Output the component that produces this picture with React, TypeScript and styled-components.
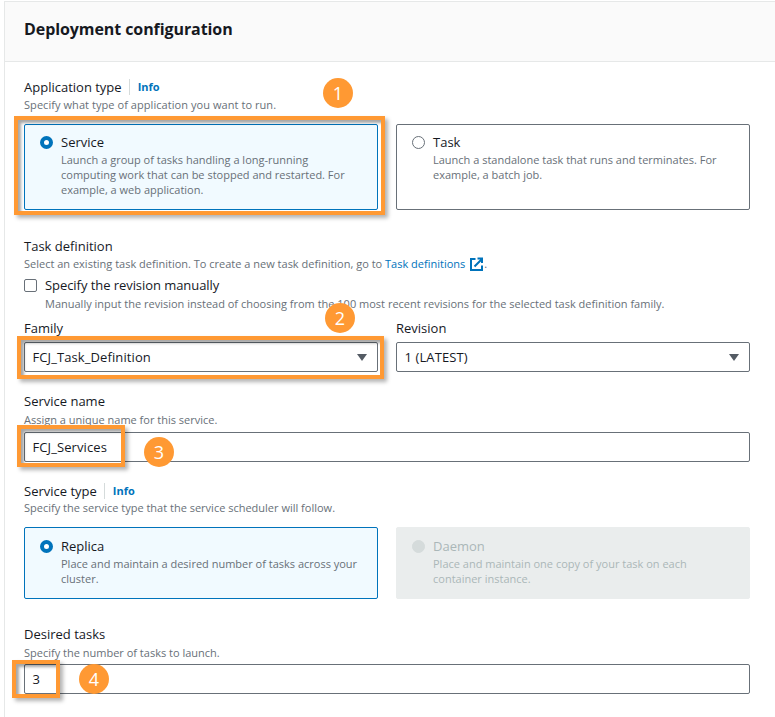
import React from "react";
import styled, { createGlobalStyle } from "styled-components";

const Global = createGlobalStyle`
  html, body { margin: 0; padding: 0; background: #fff; }
  body { font-family: "Open Sans", "Noto Sans", Arial, sans-serif; color: #16191f; }
  #root { width: 775px; height: 717px; overflow: hidden; position: relative; }
`;

const Page = styled.div`
  position: relative;
  width: 775px;
  height: 717px;
  overflow: hidden;
  padding: 1px 0 0 4px;
  box-sizing: border-box;
`;

const Panel = styled.section`
  width: 790px;
  height: 730px;
  box-sizing: border-box;
  border: 1px solid #e6e8e8;
  background: #fff;
`;

const Header = styled.header`
  height: 60px;
  box-sizing: border-box;
  background: #fafafa;
  border-bottom: 1px solid #e6e8e8;
  padding: 15px 19px 0;
`;

const Title = styled.h2`
  margin: 0;
  font-size: 16px;
  line-height: 24px;
  font-weight: 700;
  letter-spacing: -0.08px;
  color: #16191f;
`;

const Body = styled.div`
  width: 726px;
  margin-left: 19px;
  display: flex;
  flex-direction: column;
`;

const LabelRow = styled.div<{ $top?: number }>`
  display: flex;
  align-items: center;
  height: 18px;
  margin-top: ${(p) => p.$top ?? 0}px;
`;

const Label = styled.label`
  font-size: 13px;
  line-height: 18px;
  color: #16191f;
`;

const CheckLabel = styled(Label)`
  letter-spacing: -0.06px;
`;

const Info = styled.a`
  margin-left: 7px;
  padding-left: 8px;
  border-left: 1px solid #d5dbdb;
  font-size: 11px;
  line-height: 16px;
  font-weight: 700;
  color: #0073bb;
`;

const Hint = styled.div<{ $top?: number; $spacing?: number }>`
  margin-top: ${(p) => p.$top ?? 1}px;
  font-size: 11px;
  line-height: 16px;
  letter-spacing: ${(p) => p.$spacing ?? 0}px;
  color: #687078;
  white-space: nowrap;
`;

const Link = styled.a`
  color: #0073bb;
`;

const Grid = styled.div<{ $top: number }>`
  display: grid;
  grid-template-columns: 354px 354px;
  column-gap: 18px;
  margin-top: ${(p) => p.$top}px;
`;

const Tile = styled.div<{ $state: "on" | "off" | "disabled"; $h: number; $pad?: number }>`
  height: ${(p) => p.$h}px;
  box-sizing: border-box;
  border-radius: 2px;
  padding: ${(p) => p.$pad ?? 8}px 15px;
  display: flex;
  gap: 8px;
  border: 1px solid
    ${(p) => (p.$state === "on" ? "#0073bb" : p.$state === "off" ? "#687078" : "#eaeded")};
  background: ${(p) => (p.$state === "on" ? "#f1faff" : p.$state === "off" ? "#fff" : "#eaeded")};
`;

const Radio = styled.span<{ $state: "on" | "off" | "disabled" }>`
  flex: none;
  width: 13px;
  height: 13px;
  margin-top: 3px;
  border-radius: 50%;
  box-sizing: border-box;
  background: ${(p) => (p.$state === "disabled" ? "#d5dbdb" : "#fff")};
  border: ${(p) =>
    p.$state === "on"
      ? "4px solid #0073bb"
      : p.$state === "off"
        ? "1px solid #687078"
        : "1px solid #d5dbdb"};
`;

const TileText = styled.div`
  min-width: 0;
`;

const TileTitle = styled.div<{ $disabled?: boolean }>`
  font-size: 13px;
  line-height: 18px;
  color: ${(p) => (p.$disabled ? "#aab7b8" : "#16191f")};
`;

const TileDesc = styled.div<{ $disabled?: boolean }>`
  font-size: 11px;
  line-height: 15px;
  margin-top: 1px;
  color: ${(p) => (p.$disabled ? "#aab7b8" : "#687078")};
`;

const CheckRow = styled.div`
  display: flex;
  align-items: center;
  gap: 8px;
  height: 18px;
  margin-top: 4px;
`;

const CheckBox = styled.span`
  width: 13px;
  height: 13px;
  box-sizing: border-box;
  border: 1px solid #687078;
  border-radius: 2px;
  background: #fff;
`;

const CheckHint = styled.div`
  margin: 2px 0 0 21px;
  font-size: 11px;
  line-height: 16px;
  color: #687078;
  white-space: nowrap;
`;

const Columns = styled.div`
  display: grid;
  grid-template-columns: 354px 354px;
  column-gap: 18px;
  margin-top: 7px;
`;

const Field = styled.div`
  display: flex;
  flex-direction: column;
  gap: 5px;
`;

const Select = styled.div`
  height: 30px;
  box-sizing: border-box;
  border: 1px solid #687078;
  border-radius: 2px;
  background: #fff;
  padding: 0 10px 0 7.5px;
  display: flex;
  align-items: center;
  justify-content: space-between;
  font-size: 13px;
  letter-spacing: 0.1px;
  color: #16191f;
`;

const Caret = styled.span`
  width: 0;
  height: 0;
  border-left: 5.5px solid transparent;
  border-right: 5.5px solid transparent;
  border-top: 7px solid #545b64;
`;

const Input = styled.div<{ $top: number }>`
  height: 30px;
  margin-top: ${(p) => p.$top}px;
  box-sizing: border-box;
  border: 1px solid #687078;
  border-radius: 2px;
  background: #fff;
  padding: 0 7.5px;
  display: flex;
  align-items: center;
  font-size: 13px;
  letter-spacing: 0.1px;
  color: #16191f;
`;

const Highlight = styled.div<{ $x: number; $y: number; $w: number; $h: number }>`
  position: absolute;
  left: ${(p) => p.$x}px;
  top: ${(p) => p.$y}px;
  width: ${(p) => p.$w}px;
  height: ${(p) => p.$h}px;
  box-sizing: border-box;
  border: 4px solid #ff9933;
  box-shadow: 3px 3px 4px rgba(0, 0, 0, 0.3), inset 3px 3px 3px rgba(0, 0, 0, 0.35);
  pointer-events: none;
`;

const Badge = styled.div<{ $cx: number; $cy: number }>`
  position: absolute;
  left: ${(p) => p.$cx - 15}px;
  top: ${(p) => p.$cy - 15}px;
  width: 30px;
  height: 30px;
  border-radius: 50%;
  background: #ff9933;
  color: #fff;
  font-size: 18px;
  line-height: 30px;
  text-align: center;
`;

const ExternalSvg = styled.svg`
  vertical-align: -3px;
  margin-left: 5px;
  margin-right: 1px;
`;

const ExternalIcon = () => (
  <ExternalSvg width="13" height="14" viewBox="0 0 13 14" fill="none" stroke="#0073bb" strokeWidth="2">
    <path d="M5.5 2H1v11h11V8.5" />
    <path d="M4.5 9.5 11.5 2.5M7.5 1.5h4.5V6" />
  </ExternalSvg>
);

export default function App() {
  return (
    <Page>
      <Global />
      <Panel>
        <Header>
          <Title>Deployment configuration</Title>
        </Header>
        <Body>
          <LabelRow $top={16}>
            <Label>Application type</Label>
            <Info>Info</Info>
          </LabelRow>
          <Hint $spacing={0.06}>Specify what type of application you want to run.</Hint>
          <Grid $top={11}>
            <Tile $state="on" $h={86}>
              <Radio $state="on" />
              <TileText>
                <TileTitle>Service</TileTitle>
                <TileDesc>
                  Launch a group of tasks handling a long-running computing work that can be stopped and restarted. For
                  example, a web application.
                </TileDesc>
              </TileText>
            </Tile>
            <Tile $state="off" $h={86}>
              <Radio $state="off" />
              <TileText>
                <TileTitle>Task</TileTitle>
                <TileDesc>Launch a standalone task that runs and terminates. For example, a batch job.</TileDesc>
              </TileText>
            </Tile>
          </Grid>
          <LabelRow $top={27}>
            <Label>Task definition</Label>
          </LabelRow>
          <Hint>
            Select an existing task definition. To create a new task definition, go to <Link>Task definitions</Link>
            <ExternalIcon />.
          </Hint>
          <CheckRow>
            <CheckBox />
            <CheckLabel>Specify the revision manually</CheckLabel>
          </CheckRow>
          <CheckHint>Manually input the revision instead of choosing from the 100 most recent revisions for the selected task definition family.</CheckHint>
          <Columns>
            <Field>
              <Label>Family</Label>
              <Select>
                FCJ_Task_Definition
                <Caret />
              </Select>
            </Field>
            <Field>
              <Label>Revision</Label>
              <Select>
                1 (LATEST)
                <Caret />
              </Select>
            </Field>
          </Columns>
          <LabelRow $top={20}>
            <Label>Service name</Label>
          </LabelRow>
          <Hint $top={2}>Assign a unique name for this service.</Hint>
          <Input $top={4}>FCJ_Services</Input>
          <LabelRow $top={20}>
            <Label>Service type</Label>
            <Info>Info</Info>
          </LabelRow>
          <Hint $top={0}>Specify the service type that the service scheduler will follow.</Hint>
          <Grid $top={11}>
            <Tile $state="on" $h={72} $pad={9}>
              <Radio $state="on" />
              <TileText>
                <TileTitle>Replica</TileTitle>
                <TileDesc>Place and maintain a desired number of tasks across your cluster.</TileDesc>
              </TileText>
            </Tile>
            <Tile $state="disabled" $h={72} $pad={9}>
              <Radio $state="disabled" />
              <TileText>
                <TileTitle $disabled>Daemon</TileTitle>
                <TileDesc $disabled>Place and maintain one copy of your task on each container instance.</TileDesc>
              </TileText>
            </Tile>
          </Grid>
          <LabelRow $top={26}>
            <Label>Desired tasks</Label>
          </LabelRow>
          <Hint $top={2}>Specify the number of tasks to launch.</Hint>
          <Input $top={3}>3</Input>
        </Body>
      </Panel>

      <Highlight $x={14} $y={116} $w={371} $h={99} />
      <Highlight $x={17} $y={336} $w={367} $h={43} />
      <Highlight $x={17} $y={425} $w={108} $h={42} />
      <Highlight $x={12} $y={660} $w={48} $h={38} />
      <Badge $cx={338} $cy={93}>1</Badge>
      <Badge $cx={340} $cy={318}>2</Badge>
      <Badge $cx={159} $cy={452}>3</Badge>
      <Badge $cx={94} $cy={679}>4</Badge>
    </Page>
  );
}
